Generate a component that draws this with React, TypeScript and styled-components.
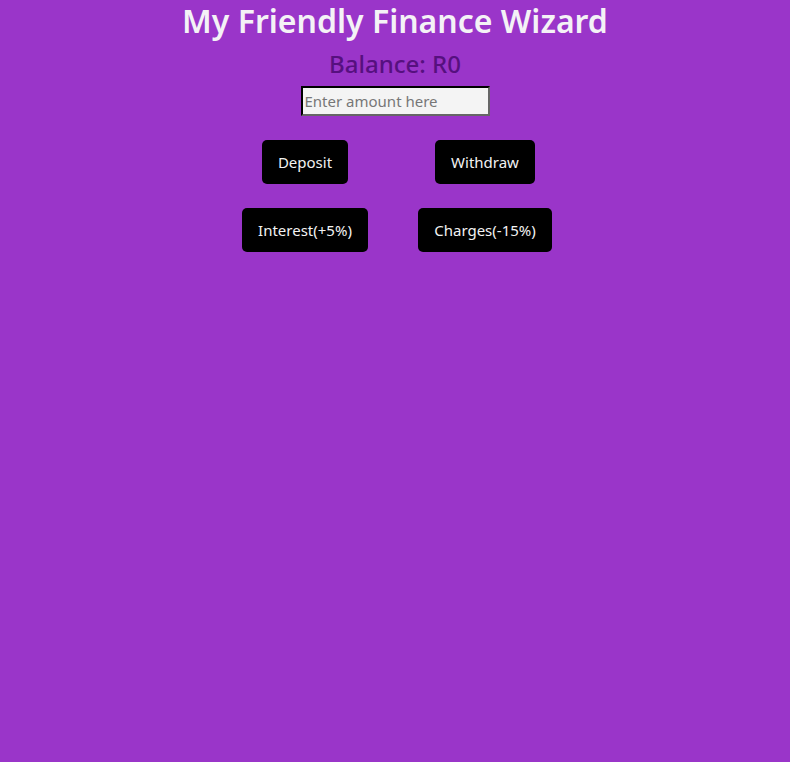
import React, { useState } from 'react'
import styled, { createGlobalStyle } from 'styled-components'

const GlobalStyle = createGlobalStyle`
    html, body {
        margin: 0;
        padding: 0;
        background-color: #9a35c9;
        font-family: "Noto Sans", "Open Sans", sans-serif;
    }
`;

const Page = styled.div`
    display: flex;
    flex-direction: column;
    align-items: center;
    min-height: 100vh;
`;

const Title = styled.h1`
    font-size: 32px;
    font-weight: 600;
    color: #f4f2f6;
    margin: 0;
    line-height: 42px;
`;

const Balance = styled.h2`
    font-size: 24px;
    font-weight: 500;
    color: #56107f;
    margin: 6px 0 6px;
    line-height: 32px;
`;

const AmountInput = styled.input`
    width: 181px;
    height: 26px;
    box-sizing: content-box;
    padding: 0 2px;
    border: 2px inset #555;
    border-color: #222 #666 #666 #222;
    background: #f4f4f4;
    font-family: inherit;
    font-size: 15px;
    color: #333;

    &::placeholder {
        color: #777;
    }
`;

const ButtonGrid = styled.div`
    display: grid;
    grid-template-columns: 180px 180px;
    row-gap: 24px;
    justify-items: center;
    margin-top: 24px;
`;

const ActionButton = styled.button`
    background: #000;
    color: #f2f2f2;
    border: none;
    border-radius: 5px;
    height: 44px;
    padding: 0 16px;
    font-family: inherit;
    font-size: 15px;
    cursor: pointer;
`;

const App: React.FC = () => {
    const [balance, setBalance] = useState(0);
    const [amount, setAmount] = useState('');

    const value = () => parseFloat(amount) || 0;

    return (
        <Page>
            <GlobalStyle />
            <Title>My Friendly Finance Wizard</Title>
            <Balance>Balance: R{balance}</Balance>
            <AmountInput
                type="number"
                placeholder="Enter amount here"
                value={amount}
                onChange={e => setAmount(e.target.value)}
            />
            <ButtonGrid>
                <ActionButton onClick={() => setBalance(balance + value())}>Deposit</ActionButton>
                <ActionButton onClick={() => setBalance(balance - value())}>Withdraw</ActionButton>
                <ActionButton onClick={() => setBalance(balance * 1.05)}>Interest(+5%)</ActionButton>
                <ActionButton onClick={() => setBalance(balance * 0.85)}>Charges(-15%)</ActionButton>
            </ButtonGrid>
        </Page>
    );
};

export default App;
